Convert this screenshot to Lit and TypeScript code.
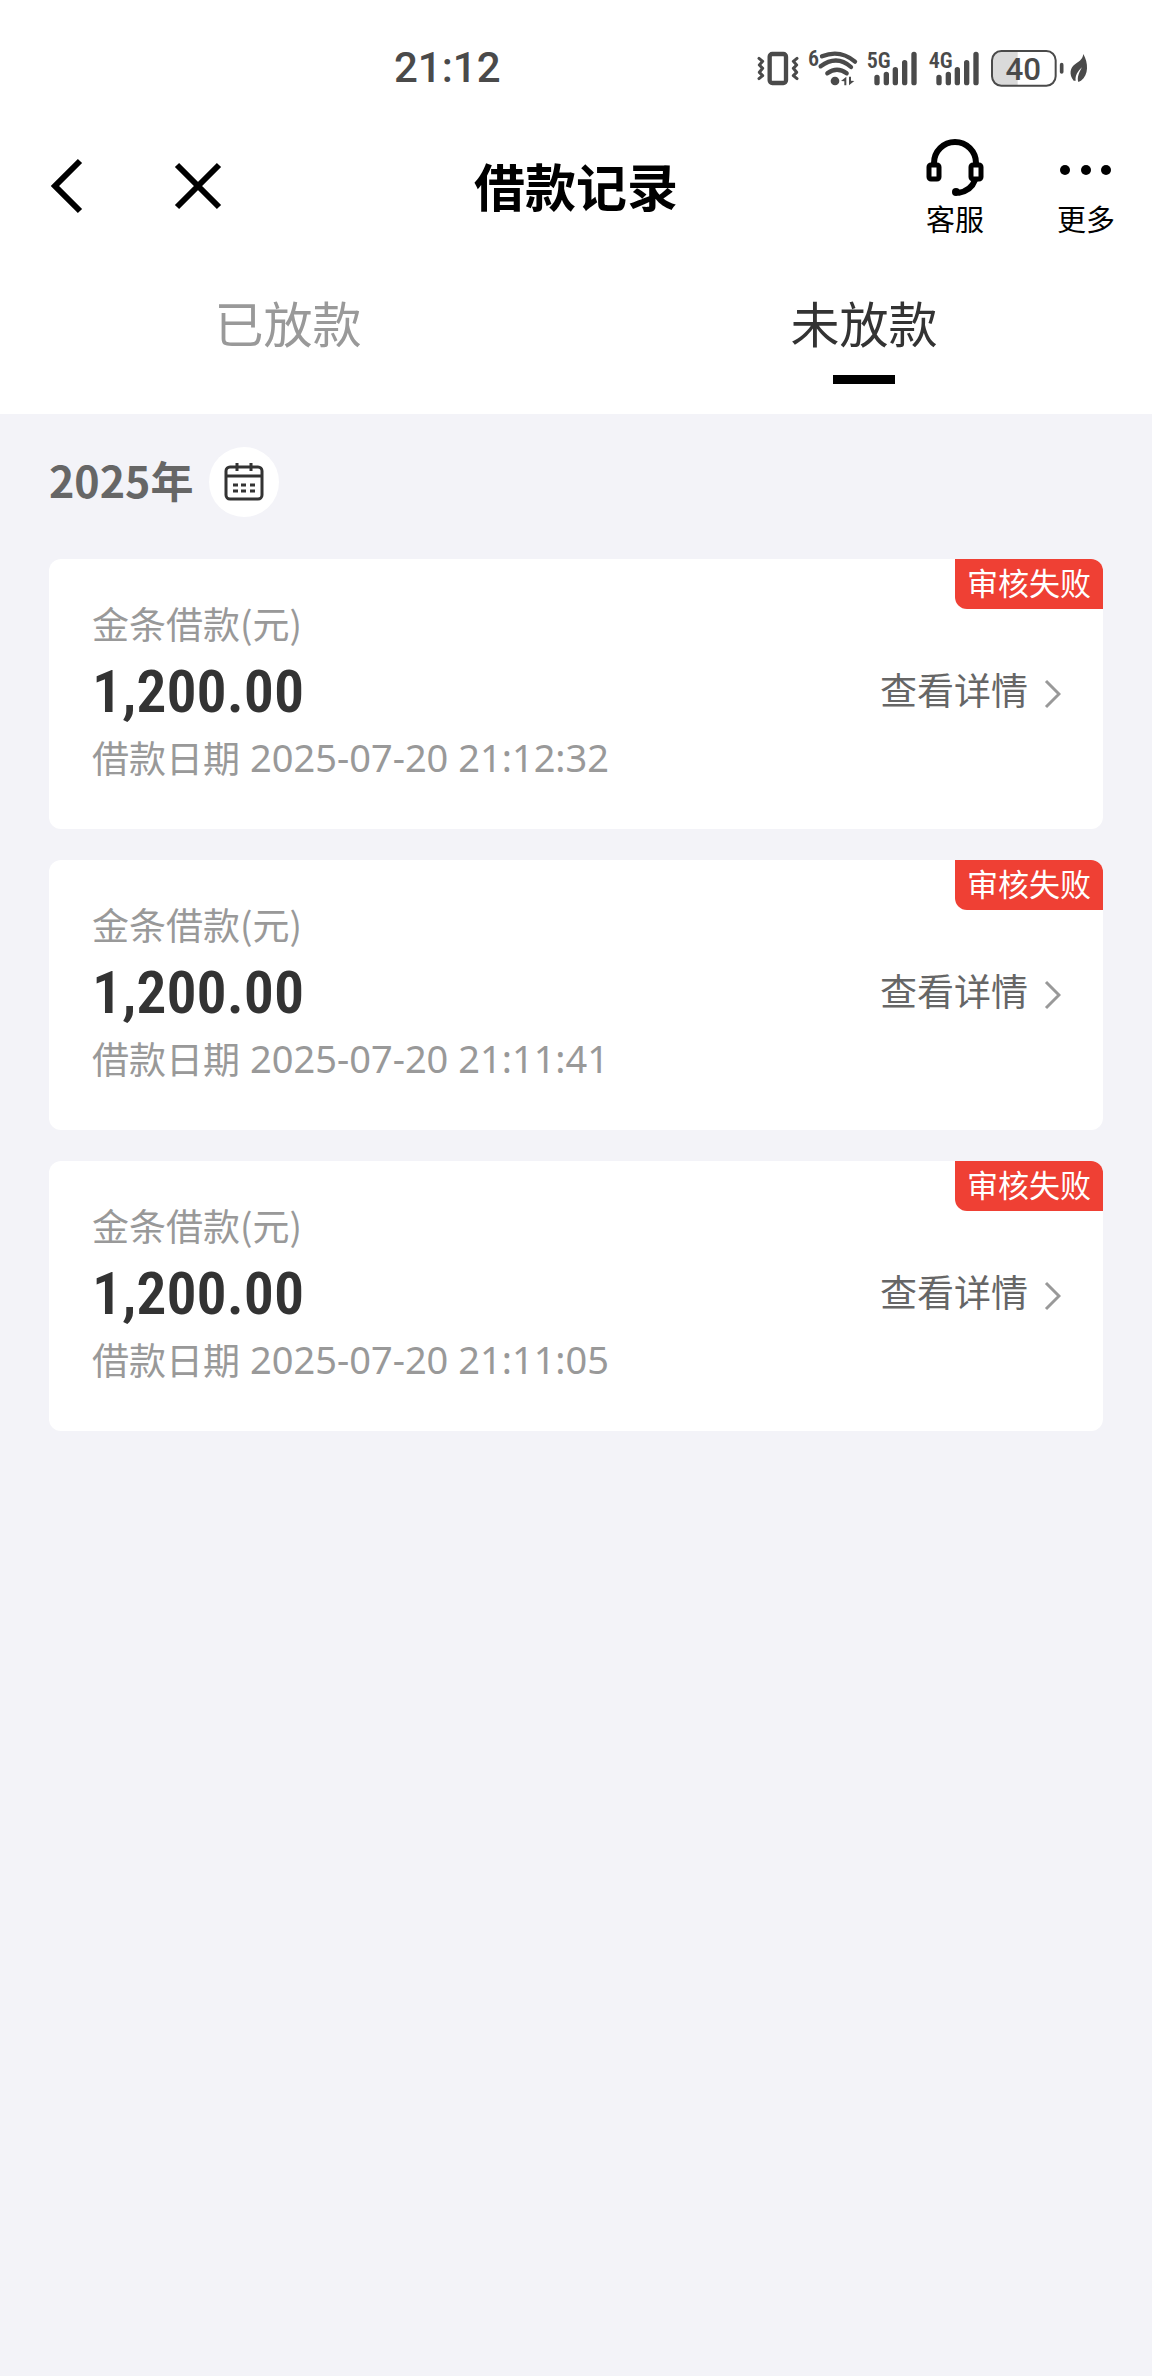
import { LitElement, html, css, svg } from "lit";
import { customElement, property, state } from "lit/decorators.js";
import { classMap } from "lit/directives/class-map.js";

interface LoanRecord {
  title: string;
  amount: string;
  date: string;
  status: string;
}

const RECORDS: LoanRecord[] = [
  { title: "金条借款(元)", amount: "1,200.00", date: "2025-07-20 21:12:32", status: "审核失败" },
  { title: "金条借款(元)", amount: "1,200.00", date: "2025-07-20 21:11:41", status: "审核失败" },
  { title: "金条借款(元)", amount: "1,200.00", date: "2025-07-20 21:11:05", status: "审核失败" },
];

const TABS = ["已放款", "未放款"];

@customElement("status-bar")
class StatusBar extends LitElement {
  static styles = css`
    :host {
      display: block;
    }
    .bar {
      display: flex;
      justify-content: space-between;
      align-items: center;
      padding: 28px 63px 2px 394px;
      color: #4a4a4a;
    }
    .time {
      font: 500 42px/80px Roboto, sans-serif;
    }
    .icons {
      display: flex;
      align-items: center;
      gap: 8px;
    }
    svg {
      display: block;
      height: 39px;
      overflow: visible;
      fill: currentColor;
    }
    .stroke {
      fill: none;
      stroke: currentColor;
      stroke-linecap: round;
      stroke-linejoin: round;
    }
    .text {
      font-family: "Roboto Condensed", Roboto, sans-serif;
      font-weight: 600;
    }
    .level {
      font-family: Roboto, sans-serif;
      font-weight: 500;
    }
    .vibrate {
      width: 44px;
    }
    .wifi,
    .five {
      width: 51px;
    }
    .four {
      width: 54px;
    }
    .battery {
      width: 73px;
    }
    .leaf {
      width: 20px;
    }
  `;

  private bars(x: number) {
    return svg`<path class="stroke" stroke-width="16"
      d="M${x} 139V155M${x + 28} 130V155M${x + 55} 116V155M${x + 83} 95V155M${x + 111} 70V155" />`;
  }

  render() {
    return html`
      <div class="bar">
        <span class="time">21:12</span>
        <div class="icons">
          <svg class="vibrate" viewBox="48 54 132 117" role="img" aria-label="振动">
            <rect class="stroke" x="89" y="69" width="49" height="87" rx="8" stroke-width="13" />
            <path class="stroke" stroke-width="9" d="M57 82L68 91L58 102L68 112L58 124L68 134L57 143M171 82L160 91L170 102L160 112L170 124L160 134L171 143" />
          </svg>
          <svg class="wifi" viewBox="204 54 153 117" role="img" aria-label="无线网络">
            <text class="text" x="204" y="105" font-size="66">6</text>
            <path class="stroke" stroke-width="13" d="M246 76Q300 54 345 92M242 106Q290 70 333 108M262 127Q291 105 320 127" />
            <circle cx="285" cy="150" r="13" />
            <path d="M303 150L319 137V163H313V151ZM343 150L327 163V137H333V149Z" />
          </svg>
          <svg class="five" viewBox="381 54 153 117" role="img" aria-label="5G 信号">
            <text class="text" x="380" y="110" font-size="66">5G</text>
            ${this.bars(411)}
          </svg>
          <svg class="four" viewBox="558 54 162 117" role="img" aria-label="4G 信号">
            <text class="text" x="566" y="110" font-size="66">4G</text>
            ${this.bars(597)}
          </svg>
          <svg class="battery" viewBox="744 54 219 117" role="img" aria-label="电量 40%">
            <path fill="#dadada" d="M833 60H784Q756 60 756 88V136Q756 164 784 164H833Z" />
            <rect class="stroke" x="756" y="60" width="191" height="104" rx="28" stroke-width="6" />
            <path class="stroke" stroke-width="11" d="M965 101V123" />
            <text class="level" x="850" y="146" font-size="94" text-anchor="middle">40</text>
          </svg>
          <svg class="leaf" viewBox="987 54 60 117" role="img" aria-label="省电模式">
            <path d="M1030 69C1045 95 1047 132 1023 149L1015 153C1010 140 1018 123 1026 109C1013 121 1005 134 1007 149L1001 149C986 130 990 108 1007 98C1022 89 1028 82 1030 69Z" />
          </svg>
        </div>
      </div>
    `;
  }
}

@customElement("nav-bar")
class NavBar extends LitElement {
  static styles = css`
    :host {
      display: block;
    }
    .nav {
      display: grid;
      grid-template-columns: 1fr auto 1fr;
      align-items: center;
      min-height: 152px;
      padding: 0 37px;
      color: #000;
    }
    .left,
    .right {
      display: flex;
      align-items: center;
    }
    .left {
      gap: 62px;
    }
    .right {
      justify-content: flex-end;
      gap: 73px;
    }
    h1 {
      margin: 0;
      padding-bottom: 2px;
      font-size: 51px;
      font-weight: 700;
      line-height: 76px;
    }
    button {
      margin: 0;
      padding: 0;
      border: 0;
      background: none;
      color: inherit;
      font-family: inherit;
      cursor: pointer;
    }
    .action {
      display: flex;
      flex-direction: column;
      align-items: center;
      gap: 4px;
      font-size: 29px;
      line-height: 36px;
    }
    svg {
      display: block;
      width: 64px;
      height: 64px;
      fill: none;
      stroke: currentColor;
      stroke-width: 6;
    }
    .dot {
      fill: currentColor;
      stroke: none;
    }
    .action svg {
      width: 60px;
      height: 60px;
      margin: 0 -1px;
    }
  `;

  render() {
    return html`
      <nav class="nav">
        <div class="left">
          <button type="button" aria-label="返回">
            <svg viewBox="0 0 64 64"><path d="M43 7L18 32L43 57" /></svg>
          </button>
          <button type="button" aria-label="关闭">
            <svg viewBox="0 0 64 64"><path d="M14 11L56 53M56 11L14 53" /></svg>
          </button>
        </div>
        <h1>借款记录</h1>
        <div class="right">
          <button type="button" class="action">
            <svg viewBox="0 0 60 60">
              <path d="M9 28V27A21 21 0 0 1 51 27V28M50 44Q46 55 33 57" />
              <rect x="4" y="29" width="10" height="14" rx="2" stroke-width="5" />
              <rect x="46" y="29" width="10" height="14" rx="2" stroke-width="5" />
              <circle class="dot" cx="31" cy="56" r="4" />
            </svg>
            客服
          </button>
          <button type="button" class="action">
            <svg viewBox="0 0 60 60">
              <circle class="dot" cx="9" cy="34" r="5" />
              <circle class="dot" cx="30" cy="34" r="5" />
              <circle class="dot" cx="50" cy="34" r="5" />
            </svg>
            更多
          </button>
        </div>
      </nav>
    `;
  }
}

@customElement("loan-card")
class LoanCard extends LitElement {
  @property({ attribute: false }) record!: LoanRecord;

  static styles = css`
    :host {
      display: block;
    }
    .card {
      position: relative;
      display: flex;
      justify-content: space-between;
      align-items: center;
      padding: 36px 42px 46px 43px;
      border-radius: 12px;
      background: #fff;
      color: #999;
      font-size: 37px;
    }
    .label {
      line-height: 56px;
    }
    .amount {
      padding: 4px 0 2px;
      color: #333;
      font: 600 60px/74px "Roboto Condensed", "Liberation Sans Narrow", sans-serif;
    }
    .date {
      display: flex;
      align-items: center;
      gap: 10px;
      line-height: 52px;
    }
    time {
      font-family: "Noto Sans", sans-serif;
      font-size: 38px;
    }
    .badge {
      position: absolute;
      top: 0;
      right: 0;
      padding: 0 12px 4px;
      border-radius: 0 12px;
      background: #ef4034;
      color: #fff;
      font-size: 31px;
      line-height: 46px;
    }
    .details {
      display: flex;
      align-items: center;
      gap: 15px;
      color: #666;
      line-height: 56px;
      text-decoration: none;
    }
    svg {
      width: 18px;
      height: 30px;
      margin-top: 10px;
      fill: none;
      stroke: #999;
      stroke-width: 3;
    }
  `;

  render() {
    const { title, amount, date, status } = this.record;
    return html`
      <article class="card">
        <div>
          <div class="label">${title}</div>
          <div class="amount">${amount}</div>
          <div class="date"><span>借款日期</span><time>${date}</time></div>
        </div>
        <a class="details" href="#details">
          查看详情
          <svg viewBox="0 0 18 30" aria-hidden="true"><path d="M3 2L16 15L3 28" /></svg>
        </a>
        <span class="badge">${status}</span>
      </article>
    `;
  }
}

@customElement("app-root")
class AppRoot extends LitElement {
  @state() private active = 1;

  static styles = css`
    :host {
      display: block;
      min-height: 100vh;
      background: #f3f3f8;
      font-family: "Noto Sans CJK SC", sans-serif;
    }
    button {
      margin: 0;
      padding: 0;
      border: 0;
      background: none;
      font-family: inherit;
      cursor: pointer;
    }
    .top {
      background: #fff;
    }
    .tabs {
      display: grid;
      grid-template-columns: 1fr 1fr;
    }
    .tab {
      display: flex;
      flex-direction: column;
      align-items: center;
      gap: 17px;
      padding: 24px 0 30px;
      color: #999;
      font-size: 49px;
      line-height: 72px;
    }
    .tab::after {
      content: "";
      width: 62px;
      height: 9px;
    }
    .tab.active {
      color: #333;
    }
    .tab.active::after {
      background: #000;
    }
    .content {
      padding: 33px 49px;
    }
    .year {
      display: flex;
      align-items: center;
      gap: 16px;
      margin-bottom: 42px;
    }
    h2 {
      margin: 0;
      padding-bottom: 6px;
      color: #666;
      font-size: 43px;
      font-weight: 700;
      line-height: 64px;
    }
    .calendar {
      display: grid;
      place-items: center;
      width: 70px;
      height: 70px;
      border-radius: 50%;
      background: #fff;
    }
    .calendar svg {
      width: 40px;
      height: 40px;
      fill: none;
      stroke: #333;
      stroke-width: 3;
    }
    .list {
      display: grid;
      gap: 31px;
    }
  `;

  render() {
    return html`
      <header class="top">
        <status-bar></status-bar>
        <nav-bar></nav-bar>
        <div class="tabs" role="tablist">
          ${TABS.map(
            (name, i) => html`
              <button
                type="button"
                role="tab"
                aria-selected=${i === this.active ? "true" : "false"}
                class=${classMap({ tab: true, active: i === this.active })}
                @click=${() => (this.active = i)}
              >
                ${name}
              </button>
            `,
          )}
        </div>
      </header>
      <main class="content">
        <div class="year">
          <h2>2025年</h2>
          <button type="button" class="calendar" aria-label="选择年份">
            <svg viewBox="0 0 40 40">
              <rect x="2" y="5" width="36" height="32" rx="4" />
              <path d="M2 14H38M13 1V9M27 1V9" />
              <path d="M9 23H14M17 23H22M26 23H31M9 29H14M17 29H22M26 29H31" />
            </svg>
          </button>
        </div>
        <div class="list">
          ${RECORDS.map((record) => html`<loan-card .record=${record}></loan-card>`)}
        </div>
      </main>
    `;
  }
}
